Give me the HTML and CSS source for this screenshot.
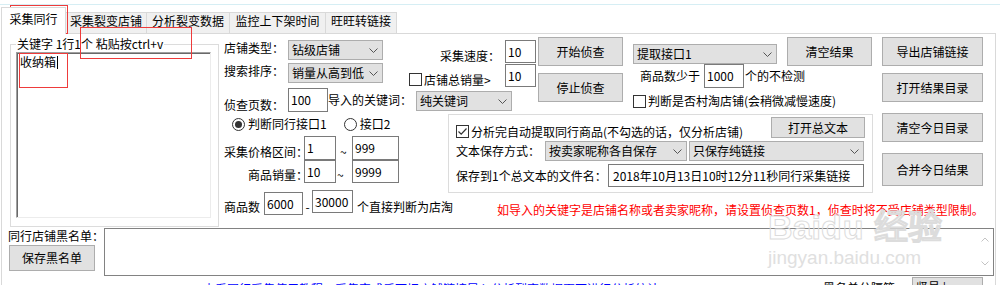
FILE: index.html
```html
<!DOCTYPE html>
<html lang="zh-CN">
<head>
    <meta charset="UTF-8">
    <title>采集同行</title>
    <link rel="stylesheet" href="styles.css">
</head>
<body>

<div class="topline"></div>
<div class="tabs">
    <div class="tab tab-1 active">采集同行</div>
    <div class="tab tab-2">采集裂变店铺</div>
    <div class="tab tab-3">分析裂变数据</div>
    <div class="tab tab-4">监控上下架时间</div>
    <div class="tab tab-5">旺旺转链接</div>
</div>

<div class="page">
    <div class="top">
        <fieldset class="keywords">
            <legend>关键字 1行1个 粘贴按ctrl+v</legend>
            <div class="keywords-box">收纳箱<span class="caret"></span></div>
        </fieldset>

        <div class="main">
            <div class="upper">
                <div class="search">
                    <div class="search-top">
                        <div class="search-left">
                            <div class="row row-shop">
                                <span class="lbl lbl-left">店铺类型：</span>
                                <div class="combo combo-shop"><span>钻级店铺</span><svg class="dd" width="9" height="5" viewBox="0 0 9 5"><path d="M0.5 0.5 L4.5 4.5 L8.5 0.5" fill="none" stroke="#555"/></svg></div>
                            </div>
                            <div class="row row-sort">
                                <span class="lbl lbl-left">搜索排序：</span>
                                <div class="combo combo-shop"><span>销量从高到低</span><svg class="dd" width="9" height="5" viewBox="0 0 9 5"><path d="M0.5 0.5 L4.5 4.5 L8.5 0.5" fill="none" stroke="#555"/></svg></div>
                            </div>
                        </div>
                        <div class="search-right">
                            <div class="row row-speed">
                                <span class="lbl lbl-speed">采集速度：</span>
                                <div class="tb tb-speed">10</div>
                            </div>
                            <div class="row row-total">
                                <span class="chk"></span>
                                <span class="lbl lbl-total">店铺总销量&gt;</span>
                                <div class="tb tb-speed push">10</div>
                            </div>
                        </div>
                    </div>
                    <div class="row row-pages">
                        <span class="lbl lbl-left lbl-pages">侦查页数：</span>
                        <div class="tb tb-pages">100</div>
                        <span class="lbl lbl-import">导入的关键词：</span>
                        <div class="combo combo-kw"><span>纯关键词</span><svg class="dd" width="9" height="5" viewBox="0 0 9 5"><path d="M0.5 0.5 L4.5 4.5 L8.5 0.5" fill="none" stroke="#555"/></svg></div>
                    </div>
                </div>

                <div class="run">
                    <div class="btn btn-run">开始侦查</div>
                    <div class="btn btn-run btn-stop">停止侦查</div>
                </div>

                <div class="fetch">
                    <div class="fetch-col">
                        <div class="combo combo-api"><span>提取接口1</span><svg class="dd" width="9" height="5" viewBox="0 0 9 5"><path d="M0.5 0.5 L4.5 4.5 L8.5 0.5" fill="none" stroke="#555"/></svg></div>
                        <div class="row row-min">
                            <span class="lbl lbl-min">商品数少于</span>
                            <div class="tb tb-min">1000</div>
                            <span class="lbl">个的不检测</span>
                        </div>
                        <div class="row row-village">
                            <span class="chk"></span>
                            <span class="lbl lbl-chk">判断是否村淘店铺(会稍微减慢速度)</span>
                        </div>
                    </div>
                    <div class="btn btn-clear">清空结果</div>
                </div>
            </div>

            <div class="lower">
                <div class="filters">
                    <div class="row row-radio">
                        <span class="radio checked"></span>
                        <span class="lbl lbl-radio">判断同行接口1</span>
                        <span class="radio radio-2"></span>
                        <span class="lbl lbl-radio">接口2</span>
                    </div>
                    <div class="row row-price">
                        <span class="lbl lbl-range">采集价格区间：</span>
                        <div class="tb tb-from">1</div>
                        <span class="lbl tilde">~</span>
                        <div class="tb tb-to">999</div>
                    </div>
                    <div class="row row-sales">
                        <span class="lbl lbl-range lbl-sales">商品销量：</span>
                        <div class="tb tb-from">10</div>
                        <span class="lbl tilde tilde-2">~</span>
                        <div class="tb tb-to">9999</div>
                    </div>
                    <div class="row row-count">
                        <span class="lbl lbl-count">商品数</span>
                        <div class="tb tb-count-a">6000</div>
                        <span class="lbl dash">-</span>
                        <div class="tb tb-count-b">30000</div>
                        <span class="lbl lbl-count-tail">个直接判断为店淘</span>
                    </div>
                </div>

                <div class="save-area">
                    <div class="save-box">
                        <div class="row row-auto">
                            <span class="chk checked"><svg width="11" height="11" viewBox="0 0 11 11"><path d="M1.5 5.5 L4.2 8.2 L9.5 2.5" fill="none" stroke="#333" stroke-width="1.2"/></svg></span>
                            <span class="lbl lbl-auto">分析完自动提取同行商品(不勾选的话，仅分析店铺)</span>
                            <div class="btn btn-open">打开总文本</div>
                        </div>
                        <div class="row row-mode">
                            <span class="lbl lbl-mode">文本保存方式：</span>
                            <div class="combo combo-m1"><span>按卖家昵称各自保存</span><svg class="dd" width="9" height="5" viewBox="0 0 9 5"><path d="M0.5 0.5 L4.5 4.5 L8.5 0.5" fill="none" stroke="#555"/></svg></div>
                            <div class="combo combo-m2"><span>只保存纯链接</span><svg class="dd" width="9" height="5" viewBox="0 0 9 5"><path d="M0.5 0.5 L4.5 4.5 L8.5 0.5" fill="none" stroke="#555"/></svg></div>
                        </div>
                        <div class="row row-file">
                            <span class="lbl lbl-file">保存到1个总文本的文件名：</span>
                            <div class="tb tb-file">2018年10月13日10时12分11秒同行采集链接</div>
                        </div>
                    </div>
                    <div class="notice">如导入的关键字是店铺名称或者卖家昵称，请设置侦查页数1，侦查时将不受店铺类型限制。</div>
                </div>
            </div>
        </div>

        <div class="side">
            <div class="btn btn-side">导出店铺链接</div>
            <div class="btn btn-side btn-side-2">打开结果目录</div>
            <div class="btn btn-side btn-side-3">清空今日目录</div>
            <div class="btn btn-side btn-side-4">合并今日结果</div>
        </div>
    </div>

    <div class="blacklist">
        <div class="bl-left">
            <div class="bl-title">同行店铺黑名单：</div>
            <div class="btn btn-save">保存黑名单</div>
        </div>
        <div class="bl-box">
            <div class="vscroll">
                <svg width="8" height="5" viewBox="0 0 8 5"><path d="M0.5 4.5 L4 1 L7.5 4.5" fill="none" stroke="#c4c4c4"/></svg>
                <svg width="8" height="5" viewBox="0 0 8 5"><path d="M0.5 0.5 L4 4 L7.5 0.5" fill="none" stroke="#c4c4c4"/></svg>
            </div>
        </div>
    </div>

    <div class="status">
        <span class="status-link">查看同行采集使用教程，采集完成后可把店铺链接导入分析裂变数据页面进行分析统计</span>
        <span class="status-sep">黑名单分隔符：</span>
        <div class="combo combo-sep"><span>竖号 |</span><svg class="dd" width="9" height="5" viewBox="0 0 9 5"><path d="M0.5 0.5 L4.5 4.5 L8.5 0.5" fill="none" stroke="#555"/></svg></div>
    </div>
</div>

<div class="watermark">
    <div class="wm-logo">Bai<span class="wm-paw">du</span> 经验</div>
    <div class="wm-url">jingyan.baidu.com</div>
</div>

<div class="mark mark-tab"></div>
<div class="mark mark-legend"></div>
<div class="mark mark-word"></div>

</body>
</html>
```

FILE: styles.css
```css
* {
    box-sizing: border-box;
}
body {
    margin: 0;
    width: 1000px;
    height: 285px;
    overflow: hidden;
    position: relative;
    background: #fff;
    color: #000;
    font-family: "Noto Sans CJK SC", "Noto Sans", sans-serif;
    font-size: 12px;
    line-height: 16px;
}

/* tab strip */
.topline {
    height: 5px;
    border-bottom: 1px solid #d6eef4;
}
.tabs {
    display: flex;
    align-items: flex-end;
    height: 28px;
    padding-left: 1px;
}
.tab {
    height: 21px;
    margin-right: -1px;
    border: 1px solid #d9d9d9;
    border-bottom: none;
    background: #f0f0f0;
    text-align: center;
    white-space: nowrap;
}
.tab.active {
    height: 27px;
    margin-bottom: -1px;
    padding-top: 3px;
    background: #fff;
    position: relative;
    z-index: 1;
}
.tab-1 { width: 65px; }
.tab-2 { width: 82px; }
.tab-3 { width: 84px; }
.tab-4 { width: 97px; }
.tab-5 { width: 72px; }

.page {
    margin-left: 1px;
    width: 995px;
    height: 260px;
    border: 1px solid #d9d9d9;
    background: #fff;
}
.top {
    display: flex;
    align-items: flex-start;
    margin-top: 3px;
}

/* common controls */
.row {
    display: flex;
    align-items: center;
    white-space: nowrap;
}
.lbl {
    flex: none;
    white-space: nowrap;
}
.btn {
    display: flex;
    align-items: center;
    justify-content: center;
    flex: none;
    background: #e1e1e1;
    border: 1px solid #adadad;
    white-space: nowrap;
}
.combo {
    display: flex;
    align-items: center;
    justify-content: space-between;
    flex: none;
    height: 20px;
    padding: 0 4px 0 3px;
    background: #e1e1e1;
    border: 1px solid #adadad;
    white-space: nowrap;
}
.combo .dd {
    flex: none;
}
.tb {
    display: flex;
    align-items: center;
    flex: none;
    padding-left: 2px;
    background: #fff;
    border: 1px solid #7a7a7a;
    white-space: nowrap;
}
.chk {
    display: flex;
    align-items: center;
    justify-content: center;
    flex: none;
    width: 13px;
    height: 13px;
    background: #fff;
    border: 1px solid #333;
}
.radio {
    display: flex;
    align-items: center;
    justify-content: center;
    flex: none;
    width: 13px;
    height: 13px;
    border: 1px solid #333;
    border-radius: 50%;
    background: #fff;
}
.radio.checked::after {
    content: "";
    width: 7px;
    height: 7px;
    border-radius: 50%;
    background: #333;
}

/* keyword group */
.keywords {
    margin: 0 0 0 8px;
    padding: 0 0 0 5px;
    width: 209px;
    height: 190px;
    min-width: 0;
    border: 1px solid #dcdcdc;
}
.keywords legend {
    padding: 0 1px;
    line-height: 14px;
}
.keywords-box {
    width: 195px;
    height: 166px;
    margin-top: 1px;
    padding: 1px 0 0 3px;
    border: 1px solid;
    border-color: #a0a0a0 #ececec #ececec #a0a0a0;
    box-shadow: inset 1px 1px 0 #696969;
}
.caret {
    display: inline-block;
    width: 1px;
    height: 13px;
    margin-left: 1px;
    background: #000;
    vertical-align: -2px;
}

/* middle area */
.main {
    margin-left: 3px;
    width: 652px;
}
.upper {
    display: flex;
    height: 75px;
}
.search {
    width: 314px;
}
.search-top {
    display: flex;
    height: 50px;
}
.search-left {
    width: 183px;
}
.row-shop {
    margin-top: 3px;
    height: 20px;
}
.row-sort {
    margin-top: 3px;
    height: 20px;
}
.lbl-left {
    width: 66px;
    padding-left: 2px;
    align-self: flex-start;
}
.combo-shop { width: 95px; }

.search-right {
    width: 131px;
}
.row-speed {
    margin-top: 3px;
    height: 23px;
    justify-content: flex-end;
    align-items: flex-end;
}
.lbl-speed {
    margin-right: 5px;
    line-height: 14px;
}
.tb-speed {
    width: 31px;
    height: 23px;
}
.row-total {
    margin-top: 1px;
    height: 23px;
    align-items: flex-end;
}
.row-total .chk {
    margin: 0 0 1px 4px;
}
.lbl-total {
    margin-left: 2px;
    line-height: 14px;
}
.push {
    margin-left: auto;
}
.row-pages {
    margin-top: 1px;
    height: 24px;
    align-items: flex-start;
}
.lbl-pages {
    align-self: flex-end;
    line-height: 14px;
}
.tb-pages {
    width: 40px;
    height: 24px;
}
.lbl-import {
    width: 88px;
    align-self: center;
}
.combo-kw {
    width: 96px;
    margin-top: 3px;
}

.run {
    margin-left: 2px;
    width: 85px;
}
.btn-run {
    height: 29px;
}
.btn-stop {
    margin-top: 7px;
}

.fetch {
    display: flex;
    align-items: flex-start;
    margin-left: 10px;
}
.fetch-col {
    width: 154px;
}
.combo-api {
    width: 144px;
    margin-top: 7px;
}
.row-min {
    height: 24px;
}
.lbl-min {
    padding-left: 7px;
    margin-right: 4px;
}
.tb-min {
    width: 40px;
    height: 24px;
    margin-right: 1px;
}
.row-village {
    margin-top: 5px;
    height: 16px;
}
.lbl-chk {
    margin-left: 2px;
}
.btn-clear {
    width: 85px;
    height: 29px;
}

/* filters */
.lower {
    display: flex;
}
.filters {
    width: 226px;
}
.row-radio {
    margin-top: 4px;
    height: 16px;
}
.row-radio .radio {
    margin-left: 10px;
}
.row-radio .radio-2 {
    margin-left: 17px;
}
.lbl-radio {
    margin-left: 3px;
}
.row-price {
    margin-top: 4px;
    height: 24px;
}
.row-sales {
    height: 23px;
}
.row-price .lbl,
.row-sales .lbl {
    align-self: flex-end;
}
.lbl-range {
    width: 82px;
    padding-left: 2px;
}
.lbl-sales {
    padding-left: 26px;
}
.tb-from {
    width: 32px;
    height: 100%;
}
.tb-to {
    width: 47px;
    height: 100%;
}
.tilde {
    width: 16px;
    padding-left: 4px;
}
.tilde-2 {
    padding-left: 1px;
}
.row-count {
    margin-top: 7px;
    height: 25px;
    align-items: flex-start;
}
.row-count .lbl {
    align-self: flex-end;
}
.lbl-count {
    width: 42px;
    padding-left: 2px;
}
.tb-count-a {
    width: 39px;
    height: 23px;
    align-self: flex-end;
}
.dash {
    width: 9px;
    text-align: center;
}
.tb-count-b {
    width: 41px;
    height: 23px;
}
.lbl-count-tail {
    margin-left: 4px;
}

/* save group */
.save-area {
    width: 426px;
}
.save-box {
    margin-top: 2px;
    width: 425px;
    padding: 2px 7px 5px 7px;
    border: 1px solid #dcdcdc;
}
.row-auto {
    height: 21px;
    align-items: flex-end;
}
.lbl-auto {
    margin: 0 0 -1px 2px;
    line-height: 14px;
}
.btn-open {
    width: 94px;
    height: 21px;
    margin-left: auto;
}
.row-mode {
    margin-top: 3px;
    height: 20px;
}
.lbl-mode {
    width: 89px;
}
.combo-m1 { width: 142px; }
.combo-m2 {
    width: 175px;
    margin-left: 2px;
}
.row-file {
    margin-top: 3px;
    height: 23px;
}
.lbl-file {
    width: 152px;
}
.tb-file {
    width: 256px;
    height: 23px;
    padding-left: 4px;
}
.notice {
    margin-top: 9px;
    padding-left: 49px;
    color: #ff0000;
    white-space: nowrap;
}

/* right buttons */
.side {
    margin-left: 8px;
    width: 101px;
}
.btn-side {
    height: 29px;
}
.btn-side-2 { margin-top: 7px; }
.btn-side-3 { margin-top: 11px; }
.btn-side-4 {
    margin-top: 11px;
    height: 33px;
}

/* blacklist */
.blacklist {
    display: flex;
    margin-top: 1px;
    height: 48px;
}
.bl-left {
    margin-left: 6px;
    width: 96px;
}
.bl-title {
    margin-top: 1px;
    line-height: 14px;
    white-space: nowrap;
}
.btn-save {
    width: 86px;
    height: 26px;
    margin: 2px 0 0 1px;
}
.bl-box {
    display: flex;
    justify-content: flex-end;
    width: 890px;
    height: 48px;
    border: 1px solid #828282;
    background: #fff;
}
.vscroll {
    display: flex;
    flex-direction: column;
    justify-content: space-between;
    align-items: center;
    width: 17px;
    padding: 8px 0 9px;
}

.status {
    display: flex;
    align-items: flex-start;
    margin-top: 1px;
    height: 20px;
    white-space: nowrap;
}
.status-link {
    width: 620px;
    margin: 4px 0 0 201px;
    overflow: hidden;
    color: #0000ff;
}
.status-sep {
    width: 89px;
    margin-top: 3px;
}
.combo-sep {
    width: 71px;
}

/* overlays */
.watermark {
    position: absolute;
    left: 768px;
    top: 208px;
    color: #dadada;
    font-family: "Liberation Sans", sans-serif;
    pointer-events: none;
}
.wm-logo {
    font-size: 34px;
    line-height: 38px;
    font-weight: bold;
    color: transparent;
    -webkit-text-stroke: 1px #dcdcdc;
}
.wm-paw {
    letter-spacing: 1px;
}
.wm-url {
    margin-top: 1px;
    font-size: 19px;
    line-height: 22px;
    color: #e0e0e0;
}
.mark {
    position: absolute;
    border: 1px solid #ee3b3b;
    pointer-events: none;
}
.mark-tab {
    left: 10px;
    top: 5px;
    width: 58px;
    height: 29px;
}
.mark-legend {
    left: 80px;
    top: 27px;
    width: 112px;
    height: 32px;
}
.mark-word {
    left: 19px;
    top: 53px;
    width: 49px;
    height: 35px;
}
```
